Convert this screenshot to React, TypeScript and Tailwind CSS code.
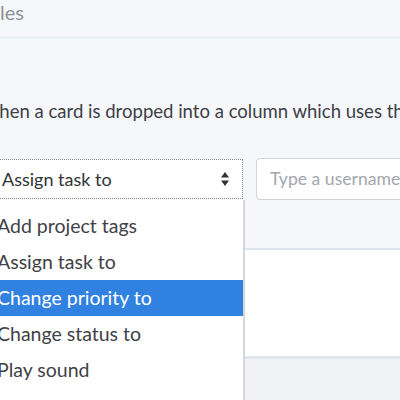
import React from "react";

const items = [
  "Add project tags",
  "Assign task to",
  "Change priority to",
  "Change status to",
  "Play sound",
];

export default function App() {
  return (
    <div className="relative w-[400px] h-[400px] overflow-hidden bg-[#f5f7fb] font-['Lato','Noto_Sans',sans-serif]">
      <div className="h-[36px] text-[20px] leading-[24px] text-[#8d9199] whitespace-nowrap">les</div>
      <div className="h-[3px] bg-[#ebf0f5]" />
      <div className="mt-[60px] h-[24px] leading-[24px] text-[18.55px] text-[#3d4046] whitespace-nowrap ml-[-19.8px]">
        When a card is dropped into a column which uses this rule
      </div>
      <div className="mt-[35px] flex items-start gap-[13px] ml-[-10px]">
        <div className="mt-[1px] h-[40px] w-[253px] shrink-0 bg-white border border-dotted border-[#8c8c8c] flex items-center justify-between pl-[11px] pr-[13px]">
          <span className="text-[18px] text-[#333] whitespace-nowrap">Assign task to</span>
          <svg width="8" height="14" viewBox="0 0 8 14" className="fill-[#333]">
            <polygon points="4,0 8,5.5 0,5.5" />
            <polygon points="0,8.5 8,8.5 4,14" />
          </svg>
        </div>
        <div className="h-[42px] w-[220px] shrink-0 bg-white border border-[#cfd4da] rounded-[4px] flex items-center pl-[13px]">
          <span className="text-[17.6px] text-[#a3a7ad] whitespace-nowrap">Type a username</span>
        </div>
      </div>
      <div className="mt-[48px] h-[2px] bg-[#dce6ee]" />
      <div className="h-[106px] bg-white" />
      <div className="h-[3px] bg-[#dfe6ec]" />
      <div className="h-[60px] bg-[#f0f2f5]" />

      <div className="absolute left-0 top-[200px] w-[245px] h-[210px] bg-white border-r-2 border-[#d6d6d6] pt-[8px]">
        {items.map((t, i) => (
          <div
            key={t}
            className={
              i === 2
                ? "h-[36px] flex items-center bg-[#3182e0] text-white text-[19.5px] whitespace-nowrap"
                : "h-[36px] flex items-center text-[#3f4247] text-[19.5px] whitespace-nowrap"
            }
          >
            <span className="ml-[-3px]">{t}</span>
          </div>
        ))}
      </div>
    </div>
  );
}
